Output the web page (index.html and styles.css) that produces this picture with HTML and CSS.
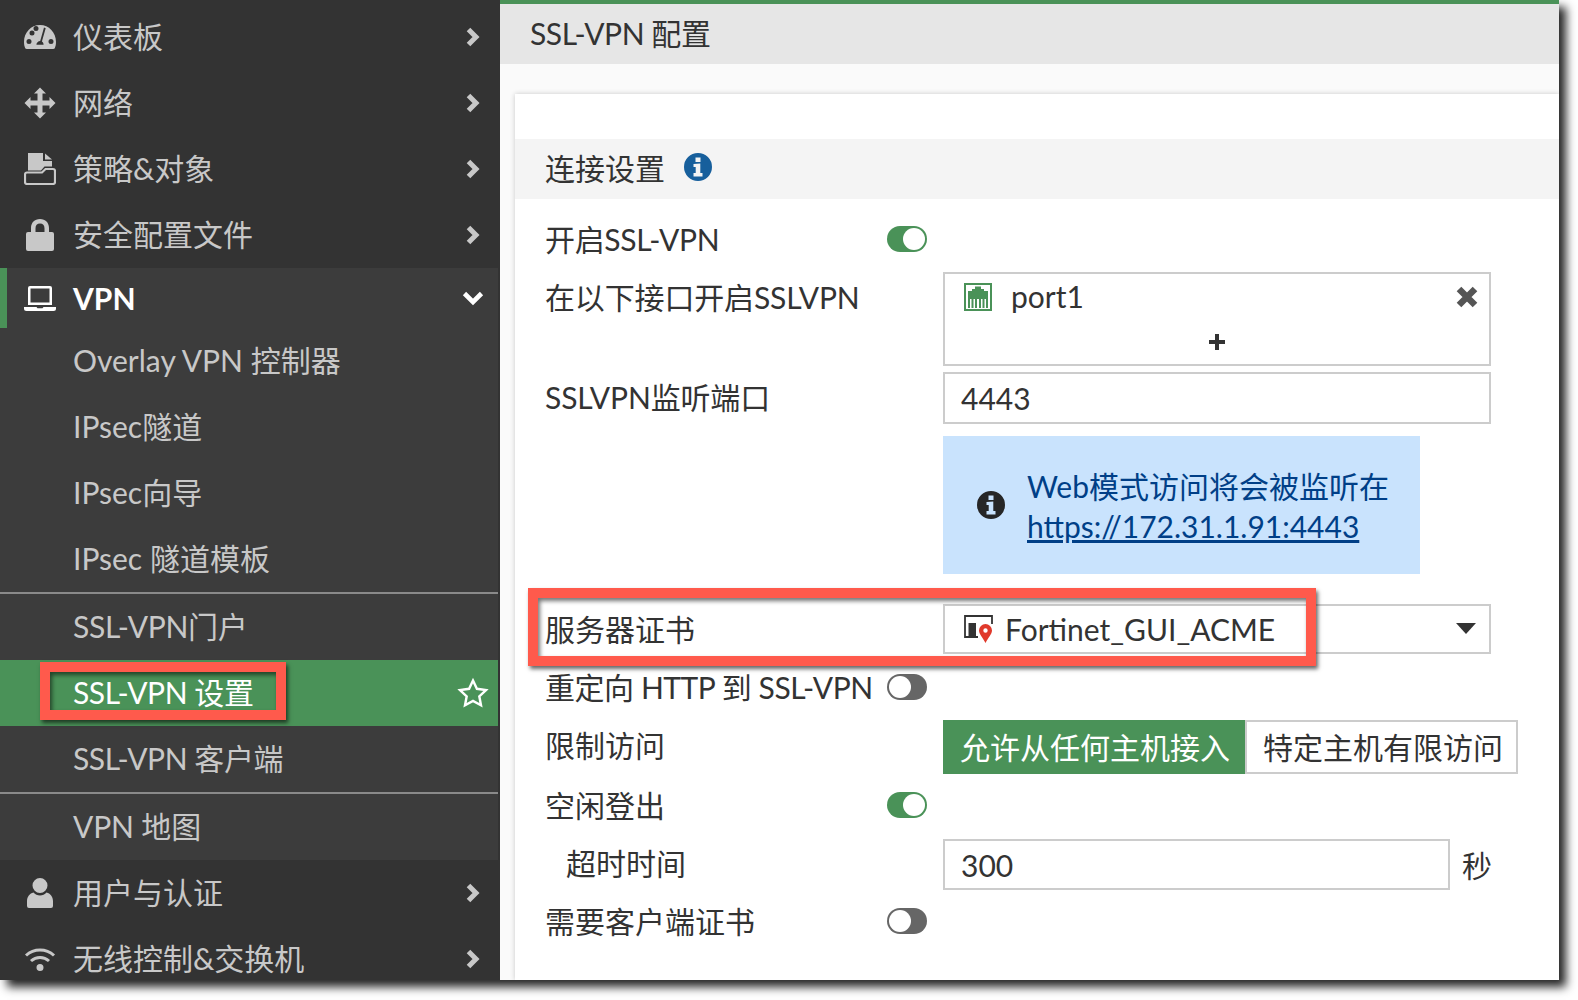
FILE: index.html
```html
<!DOCTYPE html>
<html lang="zh-CN">
<head>
<meta charset="utf-8">
<title>SSL-VPN 配置</title>
<link rel="stylesheet" href="styles.css">
</head>
<body>
<svg class="defs" width="0" height="0" aria-hidden="true">
  <symbol id="chev" viewBox="0 0 16 22"><path d="M3.500 3.500 11 11l-7.500 7.500" fill="none" stroke="currentColor" stroke-width="5"/></symbol>
  <symbol id="info" viewBox="0 0 28 28"><path fill-rule="evenodd" d="M14 0a14 14 0 1 1 0 28a14 14 0 0 1 0-28ZM11.500 4.500v4.500h5v-4.500ZM9.500 11v3h2.200v6h-2.200v3.500h9v-3.500h-2.200v-9.500Z"/></symbol>
</svg>
<div class="window">
  <nav class="sidebar">
    <a class="nav-row">
      <svg class="nav-icon" viewBox="0 0 32 32"><path fill-rule="evenodd" d="M16 4C7 4 0 11.500 0 21c0 2.500.5 4.500 1.200 6.200.4.600 1 .8 1.600.8h26.400c.6 0 1.200-.2 1.600-.8.7-1.700 1.200-3.700 1.200-6.200C32 11.500 25 4 16 4ZM5.500 12a2.500 2.500 0 1 0 5 0a2.500 2.500 0 1 0-5 0ZM2.500 20.500a2.500 2.500 0 1 0 5 0a2.500 2.500 0 1 0-5 0ZM24.500 20.500a2.500 2.500 0 1 0 5 0a2.500 2.500 0 1 0-5 0ZM9.500 7.500a2.500 2.500 0 1 0 5 0a2.500 2.500 0 1 0-5 0ZM20 6.500l-3.800 13.500c-2 .1-3.700 1.800-3.800 3.700h7.200c0-1.300-.7-2.500-1.700-3.100l3.800-13.300Z"/></svg>
      <span class="nav-label">仪表板</span>
      <svg class="chevron"><use href="#chev"/></svg>
    </a>
    <a class="nav-row">
      <svg class="nav-icon" viewBox="0 0 32 32"><path d="M16 .5L22 6.500H18.500V13.500H25.500V10L31.500 16L25.500 22V18.500H18.500V25.500H22L16 31.500L10 25.500H13.500V18.500H6.500V22L.5 16L6.500 10V13.500H13.500V6.500H10Z"/></svg>
      <span class="nav-label">网络</span>
      <svg class="chevron"><use href="#chev"/></svg>
    </a>
    <a class="nav-row">
      <svg class="nav-icon" viewBox="0 0 32 32"><path d="M4 0H19V8H28V13.500H20.500L17 17.500H4Z"/><path d="M21 .5L28 6.500H21Z"/><path fill="none" stroke="currentColor" stroke-width="2.200" d="M3 19.500H18L21.500 16H29a2 2 0 0 1 2 2V29a2 2 0 0 1-2 2H3a2 2 0 0 1-2-2V21.500a2 2 0 0 1 2-2Z"/></svg>
      <span class="nav-label">策略&amp;对象</span>
      <svg class="chevron"><use href="#chev"/></svg>
    </a>
    <a class="nav-row">
      <svg class="nav-icon" viewBox="0 0 32 32"><path fill-rule="evenodd" d="M16 0c-5.500 0-9 3.800-9 9v4H4a2 2 0 0 0-2 2v15a2 2 0 0 0 2 2h24a2 2 0 0 0 2-2V15a2 2 0 0 0-2-2h-3V9c0-5.200-3.500-9-9-9Zm0 4.500c2.900 0 4.500 2 4.500 4.800V13h-9V9.300c0-2.800 1.600-4.800 4.500-4.800Z"/></svg>
      <span class="nav-label">安全配置文件</span>
      <svg class="chevron"><use href="#chev"/></svg>
    </a>
    <div class="nav-group">
      <a class="nav-row nav-row-open">
        <svg class="nav-icon" viewBox="0 0 32 32"><path fill-rule="evenodd" d="M6 4h20a2 2 0 0 1 2 2v17H4V6a2 2 0 0 1 2-2Zm.500 2.500v14h19v-14Z"/><path d="M0 25h12.500l1 1.200h5l1-1.200H32v1.500a2.500 2.500 0 0 1-2.500 2.500h-27A2.500 2.500 0 0 1 0 26.500Z"/></svg>
        <span class="nav-label">VPN</span>
        <svg class="chevron-down" viewBox="0 0 22 16"><path d="M2.500 3.500 11 12l8.500-8.500" fill="none" stroke="currentColor" stroke-width="4.600"/></svg>
      </a>
      <a class="nav-sub"><span class="nav-text">Overlay VPN 控制器</span></a>
      <a class="nav-sub"><span class="nav-text">IPsec隧道</span></a>
      <a class="nav-sub"><span class="nav-text">IPsec向导</span></a>
      <a class="nav-sub"><span class="nav-text">IPsec 隧道模板</span></a>
      <hr class="nav-divider">
      <a class="nav-sub"><span class="nav-text tight-sm">SSL-VPN门户</span></a>
      <a class="nav-sub nav-sub-active"><span class="nav-text tight">SSL-VPN 设置</span>
        <svg class="star" viewBox="0 0 32 32"><path d="M16 3.500l3.900 8.300 9.100 1.200-6.700 6.300 1.700 9L16 23.900l-8 4.400 1.700-9L3 13l9.100-1.200Z" fill="none" stroke="currentColor" stroke-width="2.400" stroke-linejoin="miter"/></svg>
      </a>
      <a class="nav-sub"><span class="nav-text tight">SSL-VPN 客户端</span></a>
      <hr class="nav-divider">
      <a class="nav-sub"><span class="nav-text tight-xs">VPN 地图</span></a>
    </div>
    <a class="nav-row">
      <svg class="nav-icon" viewBox="0 0 32 32"><path d="M16 1a7.500 7.500 0 1 1 0 15a7.500 7.500 0 0 1 0-15ZM9.500 15.500c1.600 1.800 4 3 6.500 3s4.900-1.200 6.500-3c3.800.8 6.500 4.300 6.500 8.500v5a2 2 0 0 1-2 2H5a2 2 0 0 1-2-2v-5c0-4.200 2.700-7.700 6.500-8.500Z"/></svg>
      <span class="nav-label">用户与认证</span>
      <svg class="chevron"><use href="#chev"/></svg>
    </a>
    <a class="nav-row">
      <svg class="nav-icon" viewBox="0 0 32 32"><path d="M2 12.500C5.800 9 10.600 7 16 7s10.200 2 14 5.500M7 18c2.500-2.300 5.600-3.600 9-3.600s6.500 1.300 9 3.600" fill="none" stroke="currentColor" stroke-width="3"/><path d="M16 21a3.500 3.500 0 1 1 0 7a3.500 3.500 0 0 1 0-7Z"/></svg>
      <span class="nav-label">无线控制&amp;交换机</span>
      <svg class="chevron"><use href="#chev"/></svg>
    </a>
  </nav>

  <main class="main">
    <header class="page-title"><span class="tight">SSL-VPN 配置</span></header>
    <section class="card">
      <h2 class="section-head"><span class="section-text">连接设置</span>
        <svg class="info-blue"><use href="#info"/></svg>
      </h2>

      <div class="row row-toggle row-enable">
        <span class="label tight-sm">开启SSL-VPN</span>
        <span class="toggle toggle-on"></span>
      </div>

      <div class="row row-form row-ports">
        <span class="label tight-xs">在以下接口开启SSLVPN</span>
        <div class="field port-box">
          <div class="port-item">
            <svg class="port-icon" viewBox="0 0 28 28">
              <path fill="#fff" stroke="#4a9258" stroke-width="2" d="M1 1h26v26H1z"/>
              <path fill="#4a9258" d="M4 8h4V6h3V3.500h6V6h3v2h4v17h-2v-9h-1.500v9h-2v-9H17v9h-2v-9h-2v9h-2v-9H9.500v9h-2v-9H6v9H4Z"/>
            </svg>
            <span class="port-name">port1</span>
            <svg class="remove-icon" viewBox="0 0 22 22"><path d="M3 3l16 16M19 3L3 19" stroke="#555" stroke-width="6.500" fill="none"/></svg>
          </div>
          <svg class="add-icon" viewBox="0 0 18 18"><path d="M9 1v16M1 9h16" stroke="#333" stroke-width="4" fill="none"/></svg>
        </div>
      </div>

      <div class="row row-form row-port">
        <span class="label tight-xs">SSLVPN监听端口</span>
        <div class="field input-value">4443</div>
      </div>

      <div class="row row-form row-note">
        <span></span>
        <div class="note">
          <svg class="note-icon"><use href="#info"/></svg>
          <div class="note-text">Web模式访问将会被监听在<br><a class="note-link">https://172.31.1.91:4443</a></div>
        </div>
      </div>

      <div class="row row-form row-cert">
        <span class="label">服务器证书</span>
        <div class="field select">
          <svg class="cert-icon" viewBox="0 0 30 30">
            <path fill="none" stroke="#333" stroke-width="1.800" d="M15 24H2V3h27v8"/>
            <path fill="#333" d="M5.500 10H13v14H5.500z"/>
            <path fill="#e0392b" fill-rule="evenodd" d="M22.500 11a6.500 6.500 0 0 1 6.500 6.500c0 3.500-3.700 7-6.500 12.500-2.800-5.500-6.500-9-6.500-12.500a6.500 6.500 0 0 1 6.500-6.500Zm0 4.300a2.200 2.200 0 1 0 0 4.400a2.200 2.200 0 0 0 0-4.400Z"/>
          </svg>
          <span class="select-value">Fortinet_GUI_ACME</span>
          <svg class="caret" viewBox="0 0 20 12"><path d="M0 0h20L10 11z" fill="#333"/></svg>
        </div>
      </div>

      <div class="row row-toggle row-redirect">
        <span class="label tight">重定向 HTTP 到 SSL-VPN</span>
        <span class="toggle toggle-off"></span>
      </div>

      <div class="row row-form row-limit">
        <span class="label">限制访问</span>
        <div class="segments">
          <span class="segment segment-on">允许从任何主机接入</span>
          <span class="segment">特定主机有限访问</span>
        </div>
      </div>

      <div class="row row-toggle row-idle">
        <span class="label">空闲登出</span>
        <span class="toggle toggle-on"></span>
      </div>

      <div class="row row-form row-timeout">
        <span class="label label-indent">超时时间</span>
        <div class="timeout-wrap">
          <div class="field input-value input-timeout">300</div>
          <span class="unit">秒</span>
        </div>
      </div>

      <div class="row row-toggle row-client">
        <span class="label">需要客户端证书</span>
        <span class="toggle toggle-off"></span>
      </div>
    </section>
  </main>

  <div class="callout callout-nav"></div>
  <div class="callout callout-cert"></div>
</div>
</body>
</html>
```

FILE: styles.css
```css
* { box-sizing: border-box; }
html, body { margin: 0; padding: 0; }
body {
  width: 1578px;
  height: 1000px;
  overflow: hidden;
  background: #fff;
  font-family: Lato, "Noto Sans CJK SC", sans-serif;
  font-size: 30px;
  line-height: 40px;
  color: #333;
}
.defs { position: absolute; }
.tight { letter-spacing: -.45px; }
.tight-sm { letter-spacing: -.33px; }
.tight-xs { letter-spacing: -.15px; }
.window {
  position: relative;
  display: flex;
  width: 1559px;
  height: 980px;
  background: #fafafa;
  box-shadow: 7px 7px 9px rgba(0, 0, 0, .85);
}
.sidebar {
  flex: 0 0 500px;
  height: 980px;
  overflow: hidden;
  padding: 4px 2px 0 0;
  background: #333;
  color: #c8c8c8;
}
.nav-row {
  display: flex;
  align-items: center;
  height: 66px;
  padding-left: 24px;
}
.nav-icon {
  flex: 0 0 32px;
  width: 32px;
  height: 32px;
  fill: currentColor;
}
.nav-label { margin-left: 17px; margin-bottom: 2px; flex: 1; }
.chevron { width: 16px; height: 22px; margin-right: 17px; }
.chevron-down { width: 22px; height: 16px; margin-right: 14px; }
.nav-group { background: #3c3c3c; }
.nav-row-open {
  height: 60px;
  padding-left: 17px;
  border-left: 7px solid #4a9258;
  color: #fff;
  font-weight: 700;
}
.nav-row-open .nav-label { margin-bottom: 0; }
.nav-sub {
  display: flex;
  align-items: center;
  justify-content: space-between;
  height: 66px;
  padding-left: 73px;
}
.nav-text { margin-bottom: 2px; }
.nav-sub-active { background: #4a9258; color: #fff; }
.star { width: 32px; height: 32px; margin-right: 9px; }
.nav-divider {
  height: 2px;
  margin: 0;
  border: 0;
  background: #8a8a8a;
}

.main { flex: 1; min-width: 0; height: 980px; overflow: hidden; border-top: 4px solid #4a9258; }
.page-title {
  display: flex;
  align-items: center;
  height: 60px;
  padding: 0 0 2px 30px;
  background: #e6e6e6;
}
.card {
  height: 886px;
  margin: 30px 0 0 15px;
  background: #fff;
  box-shadow: 0 0 5px rgba(0, 0, 0, .2);
  padding-top: 45px;
}
.section-head {
  display: flex;
  align-items: center;
  height: 60px;
  margin: 0;
  padding-left: 30px;
  background: #f4f4f4;
  font-size: 30px;
  font-weight: 400;
}
.section-text { margin-bottom: 2px; }
.info-blue { width: 28px; height: 28px; margin-left: 19px; margin-top: -4px; fill: #175f9c; }
.row { display: grid; padding-left: 30px; }
.row-form { grid-template-columns: 398px 1fr; align-items: start; }
.row-toggle { grid-template-columns: 342px 40px; align-items: center; }
.label { display: block; line-height: 50px; white-space: nowrap; }
.label-indent { padding-left: 21px; line-height: 48px; }
.row-enable { height: 64px; margin-top: 8px; margin-bottom: 1px; }
.row-ports { margin-bottom: 6px; }
.row-port { margin-bottom: 12px; }
.row-note { margin-bottom: 30px; }
.row-redirect { height: 56px; margin-top: 5px; margin-bottom: 5px; }
.row-idle { height: 54px; margin-top: 4px; margin-bottom: 7px; }
.row-client { height: 60px; margin-top: 1px; }
.toggle {
  position: relative;
  display: block;
  width: 40px;
  height: 26px;
  border-radius: 13px;
}
.toggle::after {
  content: "";
  position: absolute;
  top: 2px;
  width: 22px;
  height: 22px;
  border-radius: 50%;
  background: #fff;
}
.toggle-on { background: #4a9258; }
.toggle-on::after { right: 2px; }
.toggle-off { background: #666; }
.toggle-off::after { left: 2px; }
.field {
  width: 548px;
  border: 2px solid #ccc;
  background: #fff;
}
.port-box { height: 94px; padding: 5px 11px 0 19px; }
.port-item { display: flex; align-items: center; height: 36px; }
.port-icon { width: 28px; height: 28px; }
.port-name { margin: 0 0 2px 19px; flex: 1; }
.remove-icon { width: 22px; height: 22px; }
.add-icon { display: block; width: 18px; height: 18px; margin: 18px auto 0; transform: translateX(-4px); }
.input-value {
  display: flex;
  align-items: center;
  height: 52px;
  padding-left: 16px;
}
.note {
  display: flex;
  align-items: center;
  width: 477px;
  height: 138px;
  padding-left: 34px;
  background: #c9e3fd;
  color: #003f87;
}
.note-icon { flex: 0 0 28px; width: 28px; height: 28px; fill: #262626; }
.note-text { margin-left: 22px; margin-top: 2px; line-height: 40px; white-space: nowrap; }
.note-link { text-decoration: underline; }
.select {
  display: flex;
  align-items: center;
  height: 50px;
  padding-left: 18px;
}
.cert-icon { flex: 0 0 30px; width: 30px; height: 30px; margin-top: -3px; }
.select-value { margin-left: 12px; flex: 1; }
.caret { width: 20px; height: 12px; margin-right: 13px; }
.segments { display: flex; height: 54px; }
.segment {
  display: flex;
  align-items: center;
  width: 273px;
  padding-left: 16px;
  border: 2px solid #ccc;
  background: #fff;
  white-space: nowrap;
}
.segment-on {
  width: 302px;
  padding-left: 17px;
  border: 0;
  background: #4a9258;
  color: #fff;
}
.timeout-wrap { display: flex; align-items: center; }
.input-timeout { width: 507px; height: 51px; }
.unit { margin-left: 12px; }

.callout {
  position: absolute;
  border: 10px solid #ff5a4c;
  box-shadow: 2px 3px 4px rgba(0, 0, 0, .6), inset 2px 3px 4px rgba(0, 0, 0, .55);
}
.callout-nav { left: 40px; top: 662px; width: 246px; height: 58px; }
.callout-cert { left: 528px; top: 588px; width: 788px; height: 78px; }
```
